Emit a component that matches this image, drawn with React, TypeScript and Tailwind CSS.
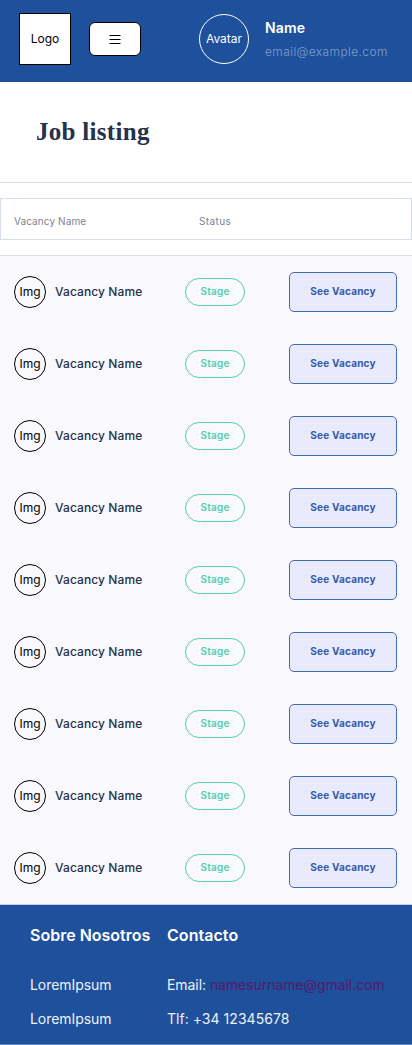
const vacancies = Array.from({ length: 9 }, (_, id) => ({ id, name: "Vacancy Name", stage: "Stage" }));

function Header() {
  return (
    <header className="flex h-[82px] items-start bg-[#1e509b] pl-[19px]">
      <div className="mt-[13px] flex size-[52px] shrink-0 items-center justify-center border border-black bg-white text-[12px] leading-[14px] text-black">
        Logo
      </div>
      <button
        type="button"
        aria-label="Menu"
        className="mt-[22px] ml-[18px] flex h-[34px] w-[52px] shrink-0 items-center justify-center rounded-[6px] border border-black bg-white"
      >
        <svg width="12" height="10" viewBox="0 0 12 10" stroke="#000" strokeWidth="1">
          <path d="M0.5 1.5H11.5M0.5 5.5H11.5M0.5 9.5H11.5" />
        </svg>
      </button>
      <div className="mt-[14px] ml-[58px] flex size-[50px] shrink-0 items-center justify-center rounded-full border border-white text-[12px] leading-[14px] text-white">
        Avatar
      </div>
      <div className="mt-[18px] ml-4 whitespace-nowrap">
        <p className="text-[14px] leading-[20px] font-semibold tracking-[0.15px] text-white">Name</p>
        <p className="mt-[4px] text-[12px] leading-[20px] font-light tracking-[0.4px] text-[#809dcf]">email@example.com</p>
      </div>
    </header>
  );
}

function VacancyRow({ name, stage }: { name: string; stage: string }) {
  return (
    <li className="flex h-[72px] items-center pr-[15px] pl-[14px]">
      <div className="flex size-8 shrink-0 items-center justify-center rounded-full border border-black text-[12px] text-black">
        Img
      </div>
      <span className="ml-[9px] w-[130px] whitespace-nowrap text-[12px] font-medium tracking-[0.1px] text-[#25324b]">
        {name}
      </span>
      <span className="flex h-7 w-[60px] items-center justify-center rounded-full border border-[#56cdad] pb-px text-[10px] font-semibold tracking-[0.2px] text-[#56cdad]">
        {stage}
      </span>
      <button
        type="button"
        className="ml-auto flex h-10 w-[108px] items-center justify-center rounded-[5px] border border-[#3f6db4] bg-[#e9ebfd] pb-px text-[10px] font-bold tracking-[0.2px] text-[#2f5ca8]"
      >
        See Vacancy
      </button>
    </li>
  );
}

function Footer() {
  return (
    <footer className="flex h-[141px] border-t border-b border-t-[#c3d0e6] border-b-[#6287bc] bg-[#1e509b] pt-[18px] pl-[30px] whitespace-nowrap text-white">
      <div className="w-[137px]">
        <h2 className="text-[16px] leading-6 font-semibold">Sobre Nosotros</h2>
        <p className="mt-[26px] text-[14px] leading-6 tracking-[-0.05px] text-[#edf2f9]">LoremIpsum</p>
        <p className="mt-[10px] text-[14px] leading-6 tracking-[-0.05px] text-[#edf2f9]">LoremIpsum</p>
      </div>
      <div>
        <h2 className="text-[16px] leading-6 font-semibold tracking-[0.05px]">Contacto</h2>
        <p className="mt-[26px] text-[14px] leading-6 tracking-[-0.06px] text-[#edf2f9]">
          Email: <a href="mailto:namesurname@gmail.com" className="text-[#551a6b]">namesurname@gmail.com</a>
        </p>
        <p className="mt-[10px] text-[14px] leading-6 tracking-[0.03px] text-[#edf2f9]">Tlf: +34 12345678</p>
      </div>
    </footer>
  );
}

export default function App() {
  return (
    <div className="w-[412px] bg-white font-['Inter',sans-serif]">
      <Header />
      <main>
        <div className="flex h-[101px] items-center border-b border-[#d6ddeb] pb-px pl-[36px]">
          <h1 className="font-['Liberation_Serif',serif] text-[25px] leading-7 font-bold tracking-[0.3px] text-[#25324b]">Job listing</h1>
        </div>
        <div className="border-b border-[#d6ddeb] py-[15px]">
          <div className="flex h-[42px] items-center border border-[#d6ddeb] pt-[5px] pl-[13px] text-[10px] tracking-[0.1px] text-[#7c8493]">
            <span className="w-[185px]">Vacancy Name</span>
            <span className="tracking-[0.4px]">Status</span>
          </div>
        </div>
        <ul className="bg-[#f8f8fd]">
          {vacancies.map((vacancy) => (
            <VacancyRow key={vacancy.id} name={vacancy.name} stage={vacancy.stage} />
          ))}
        </ul>
      </main>
      <Footer />
    </div>
  );
}
